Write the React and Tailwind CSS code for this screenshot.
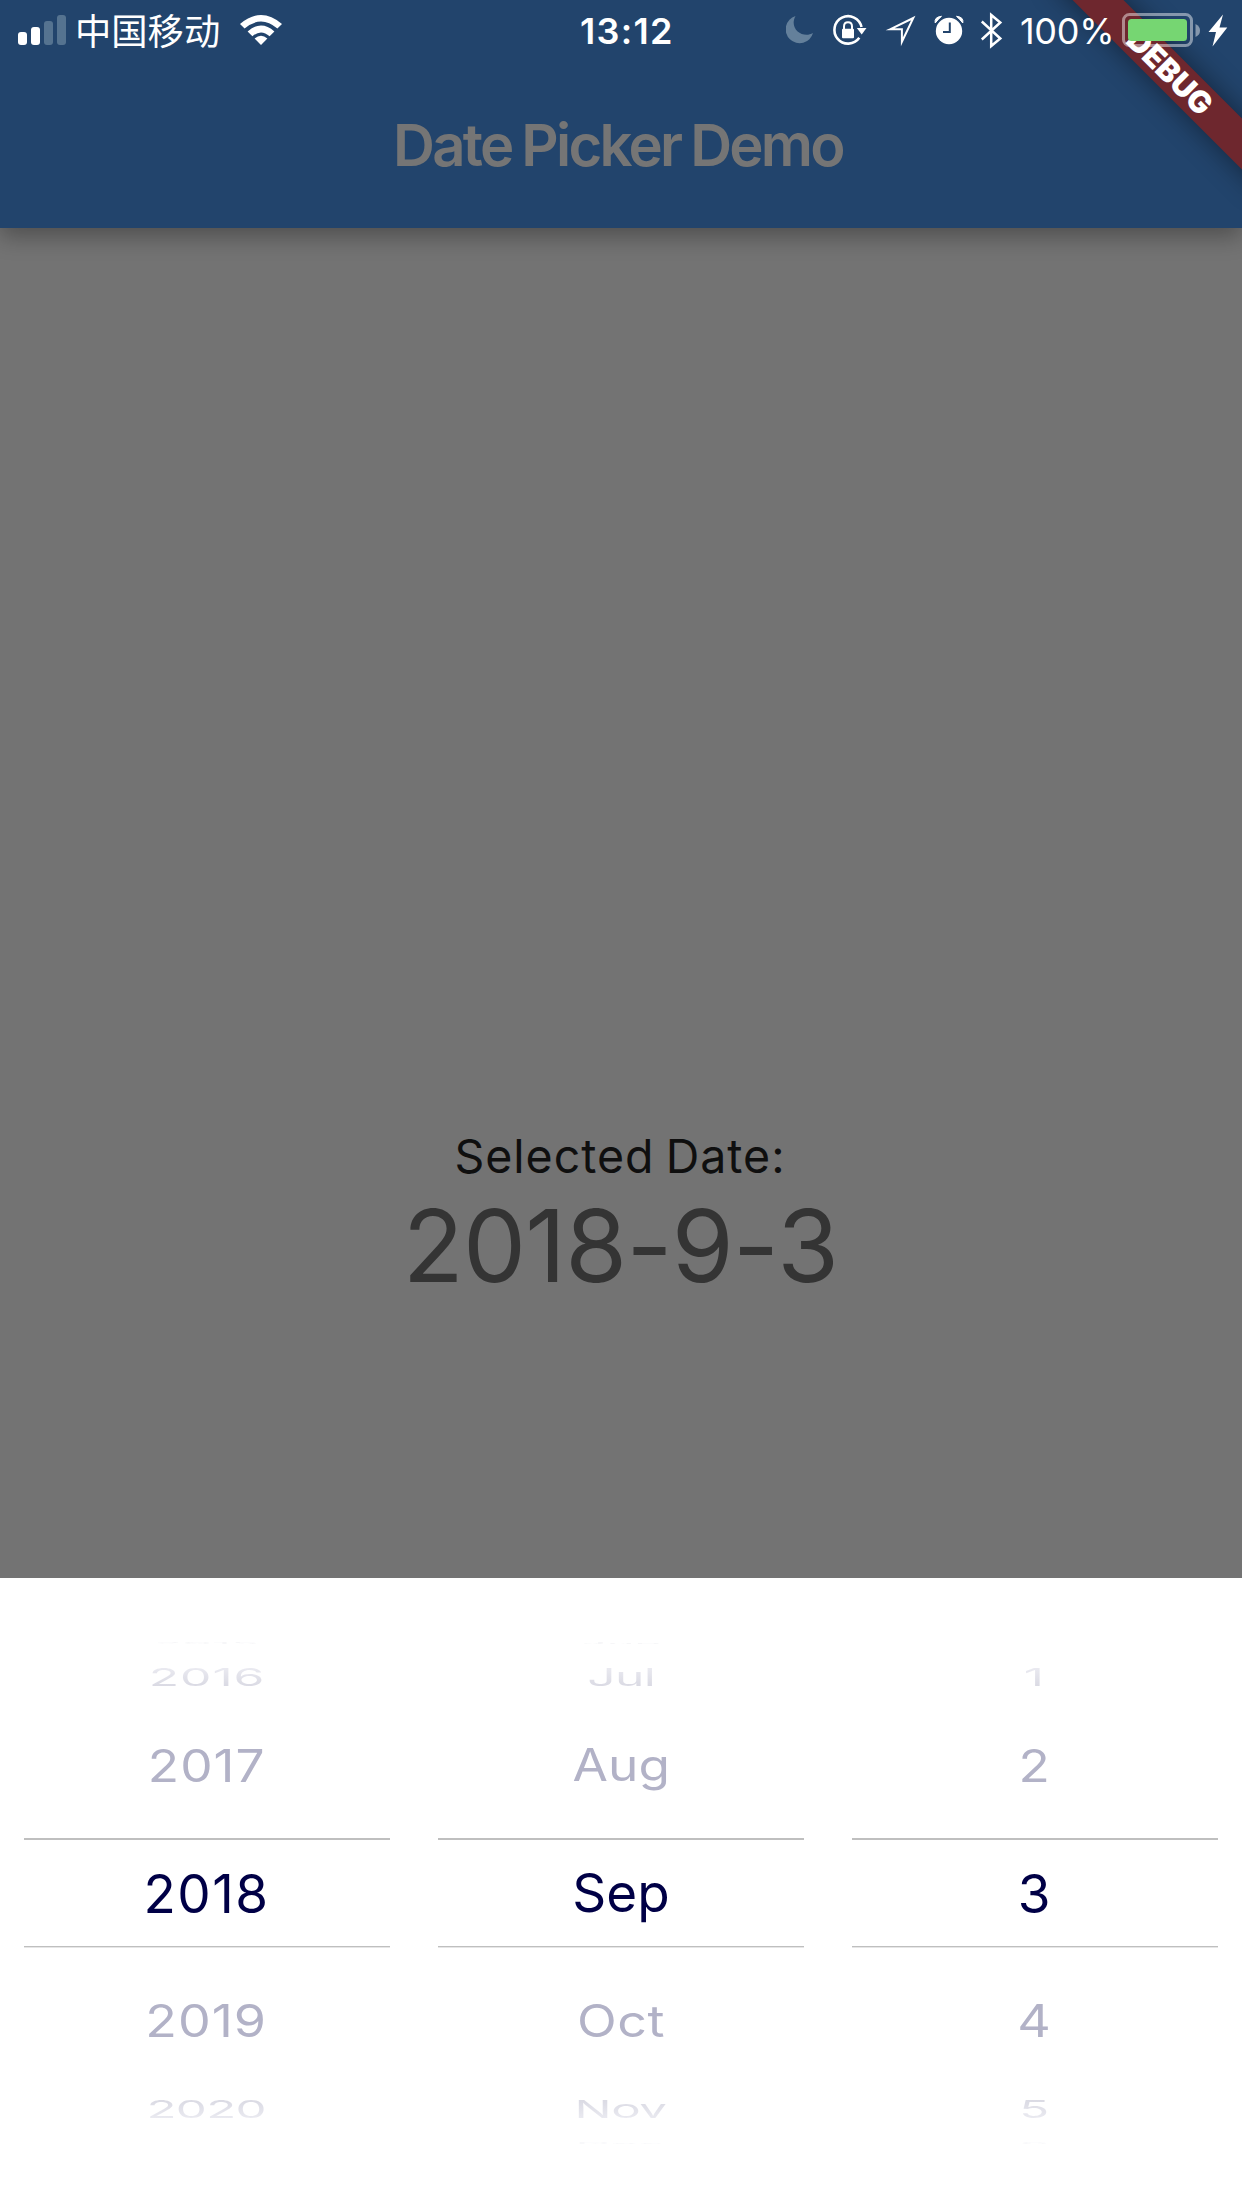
const columns = [
  {
    items: ['2015', '2016', '2017', '2018', '2019', '2020', '2021'],
    spacing: ['tracking-[0px]', 'tracking-[1px]', 'tracking-[1px]', 'tracking-[1.5px] mr-[1px]', 'tracking-[1px] mr-[1px]', 'tracking-[-0.8px] mr-[1px]', 'tracking-[1px]'],
    numeric: true,
    ghosts: [true, false],
  },
  {
    items: ['Jun', 'Jul', 'Aug', 'Sep', 'Oct', 'Nov', 'Dec'],
    spacing: ['tracking-[0px]', 'tracking-[-0.7px]', 'tracking-[0px]', 'tracking-[0px]', 'tracking-[0.6px]', 'tracking-[-0.5px] mr-[1px]', 'tracking-[0px]'],
    numeric: false,
    ghosts: [true, true],
  },
  {
    items: ['', '1', '2', '3', '4', '5', '6'],
    spacing: ['', 'mr-[3px]', 'mr-[1px]', 'mr-[2px]', 'mr-[2px]', 'mr-[2px]', 'mr-[2px]'],
    numeric: true,
    ghosts: [false, true],
  },
];

function Row({ className, textClass, children }) {
  return (
    <div className={`flex items-center justify-center ${className}`}>
      <span className={`block whitespace-pre text-[53px] leading-[60px] ${textClass}`}>{children}</span>
    </div>
  );
}

function PickerColumn({ items, spacing, ghosts, numeric }) {
  return (
    <div className="flex w-[414px] flex-col px-6 pt-[61px]">
      <Row className="h-2" textClass={`scale-x-[0.88] scale-y-[0.03] text-[#f6f6f8] ${spacing[0]} ${ghosts[0] ? '' : 'invisible'}`}>{items[0]}</Row>
      <Row className="h-[60px]" textClass={`scale-x-[0.94] scale-y-[0.46] bg-linear-to-b from-[#eeeef4] to-[#d6d6e0] bg-clip-text text-transparent ${spacing[1]}`}>{items[1]}</Row>
      <Row className={numeric ? 'h-[116px] pt-[2px]' : 'h-[116px]'} textClass={`scale-x-[0.97] scale-y-[0.84] text-[#b2b2c7] ${spacing[2]}`}>{items[2]}</Row>
      <div className="my-[15px] flex h-[110px] flex-col border-t-2 border-[#bfbfbf]">
        <Row className={numeric ? 'h-[106px] pt-[2px]' : 'h-[106px]'} textClass={`text-[#000046] ${spacing[3]}`}>{items[3]}</Row>
        <div className="h-px bg-[#bfbfbf]" />
        <div className="h-px bg-[#e6e6e6]" />
      </div>
      <Row className="h-[116px]" textClass={`scale-x-[0.98] scale-y-[0.84] text-[#b2b2c7] ${spacing[4]}`}>{items[4]}</Row>
      <Row className="h-[60px]" textClass={`scale-x-[0.93] scale-y-[0.46] bg-linear-to-b from-[#d6d6e0] to-[#eeeef4] bg-clip-text text-transparent ${spacing[5]}`}>{items[5]}</Row>
      <Row className="h-2" textClass={`scale-x-[0.9] scale-y-[0.03] text-[#f8f8fa] ${spacing[6]} ${ghosts[1] ? '' : 'invisible'}`}>{items[6]}</Row>
    </div>
  );
}

function SignalBars() {
  return (
    <div className="ml-[18px] flex h-[45px] w-12 items-end gap-1">
      <i className="h-[13px] w-[9px] rounded-[3px] bg-white" />
      <i className="h-[18px] w-[9px] rounded-[3px] bg-white" />
      <i className="h-6 w-[9px] rounded-[3px] bg-[#557390]" />
      <i className="h-[30px] w-[9px] rounded-[3px] bg-[#557390]" />
    </div>
  );
}

function WifiIcon() {
  return (
    <svg className="ml-[19px] h-[60px] w-[42px]" viewBox="240 0 42 60" fill="#fff">
      <path d="M240 24 Q261 6 282 24 L277.4 28.6 Q261 14.4 244.6 28.6 Z" />
      <path d="M247.6 31.4 Q261 19.6 274.4 31.4 L269.6 36.2 Q261 28.6 252.4 36.2 Z" />
      <path d="M254.6 38.4 Q261 33 267.4 38.4 L261 45 Z" />
    </svg>
  );
}

function StatusIcons() {
  return (
    <svg className="h-[60px] w-[220px]" viewBox="786 0 220 60" fill="none">
      <path d="M795.5 16 A13.9 13.9 0 1 0 813 33 C803 39 788.5 29 795.5 16 Z" fill="#64809b" />
      <path d="M859.3 37.8 A13.7 13.7 0 1 1 861.5 27" stroke="#fff" strokeWidth="2.6" />
      <path d="M856.8 28 H866.5 L861.7 34.4 Z" fill="#fff" />
      <rect x="842" y="28.8" width="12" height="9.4" rx="1" fill="#fff" />
      <path d="M844 30 V26.5 Q844 22.3 848 22.3 Q852 22.3 852 26.5 V30" stroke="#fff" strokeWidth="2" />
      <path d="M890 29.3 L913.3 18 L901.9 41.8 V29.3 Z" stroke="#fff" strokeWidth="2" strokeMiterlimit="10" />
      <circle cx="949" cy="31" r="13.2" fill="#fff" />
      <path d="M935.2 23 Q934 17 941.5 16.3 Q938.5 19 935.2 23 Z M962.8 23 Q964 17 956.5 16.3 Q959.5 19 962.8 23 Z" fill="#fff" stroke="#fff" strokeWidth="1" strokeLinejoin="round" />
      <path d="M949.8 22.5 V32 H943" stroke="#22446c" strokeWidth="2" />
      <path d="M981.8 21.5 L1000.3 38.5 L991.2 46 V15 L1000.3 22.5 L981.8 39.5" stroke="#fff" strokeWidth="2.5" />
    </svg>
  );
}

function Battery() {
  return (
    <svg className="absolute top-0 left-[1122px] z-20 h-[60px] w-[110px]" viewBox="1122 0 110 60" fill="none">
      <rect x="1123.5" y="14.5" width="68" height="31" rx="6" stroke="#fff" strokeOpacity="0.45" strokeWidth="3" />
      <path d="M1195.5 24 Q1200 26 1200 30.5 Q1200 35 1195.5 37 Z" fill="#fff" fillOpacity="0.45" />
      <rect x="1128" y="19" width="59" height="22" rx="3.5" fill="#76d672" />
      <path d="M1223 14.5 L1208.5 32 H1216 L1212.5 46.5 L1227.3 27.5 H1219.5 Z" fill="#fff" />
    </svg>
  );
}

function DebugBanner() {
  return (
    <div className="absolute top-0 right-0 z-10 h-[228px] w-[240px] overflow-hidden">
      <div className="absolute top-[53.5px] left-[18px] flex h-9 w-[300px] rotate-45 items-center justify-center bg-[#6e272e] text-[30.6px] font-black leading-9 text-white shadow-[0_0_28px_rgba(0,0,0,0.45)]">
        DEBUG
      </div>
    </div>
  );
}

export default function App() {
  return (
    <div className="relative flex h-[2208px] w-[1242px] flex-col overflow-hidden bg-[#737373] font-['Inter',sans-serif]">
      <header className="relative z-10 h-[228px] bg-[#22446c] shadow-[0_8px_22px_rgba(0,0,0,0.32)]">
        <div className="relative z-20 flex h-[60px] text-white">
          <div className="flex w-[580px] items-start">
            <SignalBars />
            <span className="ml-[9px] w-[146px] font-['Noto_Sans_CJK_SC',sans-serif] text-[36.3px] leading-[59px] font-normal whitespace-nowrap">中国移动</span>
            <WifiIcon />
          </div>
          <span className="w-[206px] text-[36px] leading-[62px] font-semibold tracking-[1.3px]">13:12</span>
          <StatusIcons />
          <span className="ml-[14px] text-[36px] leading-[62px] tracking-[-0.3px]">100%</span>
        </div>
        <Battery />
        <DebugBanner />
        <h1 className="mt-[49px] pr-[6px] text-center text-[58px] leading-[72px] font-semibold tracking-[-2.75px] text-[#757575] [word-spacing:-2px]">Date Picker Demo</h1>
      </header>
      <main className="flex h-[1350px] flex-col items-center pt-[901px] whitespace-nowrap">
        <p className="pr-[2px] text-[46.5px] leading-[54px] tracking-[1px] text-[#0f0f0f] [word-spacing:-3px]">Selected Date:</p>
        <p className="pr-[1px] text-[100px] leading-[126px] tracking-[-0.7px] text-[#343434] [font-feature-settings:'calt'_0]">2018-9-3</p>
      </main>
      <section className="flex h-[630px] bg-white">
        {columns.map((c, i) => (
          <PickerColumn key={i} {...c} />
        ))}
      </section>
    </div>
  );
}
